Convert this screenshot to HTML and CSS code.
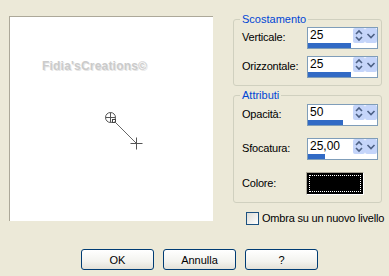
FILE: index.html
```html
<!DOCTYPE html>
<html>
<head>
    <title>Ombra</title>
    <link rel="stylesheet" href="styles.css">
</head>
<body>
    <div class="dialog">
        <div class="main">
            <div class="preview">
                <span class="watermark">Fidia'sCreations&copy;</span>
                <svg class="pointer" width="203" height="204" viewBox="0 0 203 204">
                    <circle cx="100.5" cy="100.5" r="5" fill="none" stroke="#555" stroke-width="1"/>
                    <line x1="95.5" y1="100.5" x2="105.5" y2="100.5" stroke="#555"/>
                    <line x1="100.5" y1="95.5" x2="100.5" y2="105.5" stroke="#555"/>
                    <rect x="102.5" y="102.5" width="3" height="3" fill="#fff" stroke="#444"/>
                    <line x1="104.5" y1="104.5" x2="126.5" y2="126.5" stroke="#666"/>
                    <line x1="120.5" y1="126.5" x2="132.5" y2="126.5" stroke="#555"/>
                    <line x1="126.5" y1="120.5" x2="126.5" y2="132.5" stroke="#555"/>
                </svg>
            </div>
            <div class="side">
                <fieldset class="group">
                    <legend>Scostamento</legend>
                    <div class="row">
                        <label>Verticale:</label>
                        <div class="spin">
                            <div class="spin-top">
                                <span class="spin-value">25</span>
                                <span class="spin-btn"><svg width="12" height="15" viewBox="0 0 12 15"><path d="M3 6 L6 3 L9 6 M3 9 L6 12 L9 9" fill="none" stroke="#4d6185" stroke-width="1.6"/></svg></span>
                                <span class="spin-btn"><svg width="12" height="15" viewBox="0 0 12 15"><path d="M2.5 6 L6 9.5 L9.5 6" fill="none" stroke="#4d6185" stroke-width="1.6"/></svg></span>
                            </div>
                            <div class="spin-track"><div class="spin-fill" style="width: 62.5%"></div></div>
                        </div>
                    </div>
                    <div class="row">
                        <label>Orizzontale:</label>
                        <div class="spin">
                            <div class="spin-top">
                                <span class="spin-value">25</span>
                                <span class="spin-btn"><svg width="12" height="15" viewBox="0 0 12 15"><path d="M3 6 L6 3 L9 6 M3 9 L6 12 L9 9" fill="none" stroke="#4d6185" stroke-width="1.6"/></svg></span>
                                <span class="spin-btn"><svg width="12" height="15" viewBox="0 0 12 15"><path d="M2.5 6 L6 9.5 L9.5 6" fill="none" stroke="#4d6185" stroke-width="1.6"/></svg></span>
                            </div>
                            <div class="spin-track"><div class="spin-fill" style="width: 62.5%"></div></div>
                        </div>
                    </div>
                </fieldset>
                <fieldset class="group group-attr">
                    <legend>Attributi</legend>
                    <div class="row">
                        <label>Opacità:</label>
                        <div class="spin">
                            <div class="spin-top">
                                <span class="spin-value">50</span>
                                <span class="spin-btn"><svg width="12" height="15" viewBox="0 0 12 15"><path d="M3 6 L6 3 L9 6 M3 9 L6 12 L9 9" fill="none" stroke="#4d6185" stroke-width="1.6"/></svg></span>
                                <span class="spin-btn"><svg width="12" height="15" viewBox="0 0 12 15"><path d="M2.5 6 L6 9.5 L9.5 6" fill="none" stroke="#4d6185" stroke-width="1.6"/></svg></span>
                            </div>
                            <div class="spin-track"><div class="spin-fill" style="width: 50%"></div></div>
                        </div>
                    </div>
                    <div class="row row-wide">
                        <label>Sfocatura:</label>
                        <div class="spin">
                            <div class="spin-top">
                                <span class="spin-value">25,00</span>
                                <span class="spin-btn"><svg width="12" height="15" viewBox="0 0 12 15"><path d="M3 6 L6 3 L9 6 M3 9 L6 12 L9 9" fill="none" stroke="#4d6185" stroke-width="1.6"/></svg></span>
                                <span class="spin-btn"><svg width="12" height="15" viewBox="0 0 12 15"><path d="M2.5 6 L6 9.5 L9.5 6" fill="none" stroke="#4d6185" stroke-width="1.6"/></svg></span>
                            </div>
                            <div class="spin-track"><div class="spin-fill" style="width: 25%"></div></div>
                        </div>
                    </div>
                    <div class="row row-color">
                        <label>Colore:</label>
                        <div class="swatch"><div class="swatch-inner"></div></div>
                    </div>
                </fieldset>
                <div class="check-row">
                    <span class="checkbox"></span>
                    <span class="check-label">Ombra su un nuovo livello</span>
                </div>
            </div>
        </div>
        <div class="buttons">
            <button type="button">OK</button>
            <button type="button">Annulla</button>
            <button type="button">?</button>
        </div>
    </div>
</body>
</html>
```

FILE: styles.css
```css
body {
    margin: 0;
    background-color: #ece9d8;
    font-family: "Liberation Sans", Arial, sans-serif;
    font-size: 11px;
    color: #000;
}

.dialog {
    width: 389px;
    height: 276px;
    overflow: hidden;
}

.main {
    display: flex;
    align-items: flex-start;
    padding: 13px 0 0 9px;
}

.preview {
    position: relative;
    width: 204px;
    height: 205px;
    margin-top: 3px;
    background-color: #fff;
    border-top: 1px solid #aca899;
    border-left: 1px solid #aca899;
    box-sizing: border-box;
}

.watermark {
    position: absolute;
    left: 32px;
    top: 43px;
    font-size: 12px;
    line-height: 12px;
    font-weight: bold;
    color: #cbcbcb;
    text-shadow: 1px 1px 0 #e6e6e6;
    letter-spacing: 0.2px;
}

.pointer {
    position: absolute;
    left: 0;
    top: 0;
}

.side {
    margin-left: 20px;
    width: 149px;
}

.group {
    margin: 0;
    padding: 1px 3px 7px 8px;
    border: 1px solid #d0d0bf;
    border-radius: 3px;
}

.group legend {
    padding: 0 2px;
    margin-left: -2px;
    color: #0046d5;
    line-height: 13px;
}

.group-attr {
    margin-top: 3px;
    padding-top: 2px;
}

.row {
    display: flex;
    align-items: flex-start;
    height: 22px;
}

.row + .row {
    margin-top: 7px;
}

.group-attr .row + .row {
    margin-top: 12px;
}

.group-attr .row-color {
    margin-top: 15px;
    height: 23px;
}

.row label {
    width: 65px;
    padding-top: 4px;
    line-height: 13px;
    letter-spacing: -0.2px;
}

.row-color label {
    padding-top: 5px;
}

.spin {
    width: 71px;
    height: 22px;
    box-sizing: border-box;
    border: 1px solid #7f9db9;
    background-color: #fff;
    display: flex;
    flex-direction: column;
}

.spin-top {
    display: flex;
    height: 15px;
}

.spin-value {
    flex: 1;
    padding-left: 2px;
    font-size: 12px;
    line-height: 15px;
}

.spin-btn {
    width: 12px;
    height: 15px;
    background-color: #c5d5fa;
    border-radius: 2px;
}

.spin-btn svg {
    display: block;
}

.spin-track {
    height: 5px;
}

.spin-fill {
    height: 100%;
    background-color: #316ac5;
}

.swatch {
    width: 58px;
    height: 23px;
    box-sizing: border-box;
    margin-left: -1px;
    border: 1px solid #fff;
    border-top-color: #aca899;
    border-left-color: #aca899;
    background-color: #000;
    padding: 2px;
}

.swatch-inner {
    height: 100%;
    box-sizing: border-box;
    border: 1px dotted #fff;
}

.check-row {
    display: flex;
    align-items: center;
    margin: 9px 0 0 13px;
    line-height: 13px;
    letter-spacing: -0.2px;
    white-space: nowrap;
}

.checkbox {
    flex: none;
    width: 13px;
    height: 13px;
    box-sizing: border-box;
    border: 1px solid #1c5180;
    background: linear-gradient(135deg, #dcdcd7, #fff);
    margin-right: 3px;
}

.buttons {
    display: flex;
    gap: 9px;
    padding: 0 0 0 81px;
    margin-top: 24px;
}

.buttons button {
    width: 73px;
    height: 21px;
    padding: 0;
    border: 1px solid #003c74;
    border-radius: 3px;
    background: linear-gradient(#ffffff, #f3f3ef 60%, #e3e1d8);
    font-family: "Liberation Sans", Arial, sans-serif;
    font-size: 11px;
    color: #000;
}
```
